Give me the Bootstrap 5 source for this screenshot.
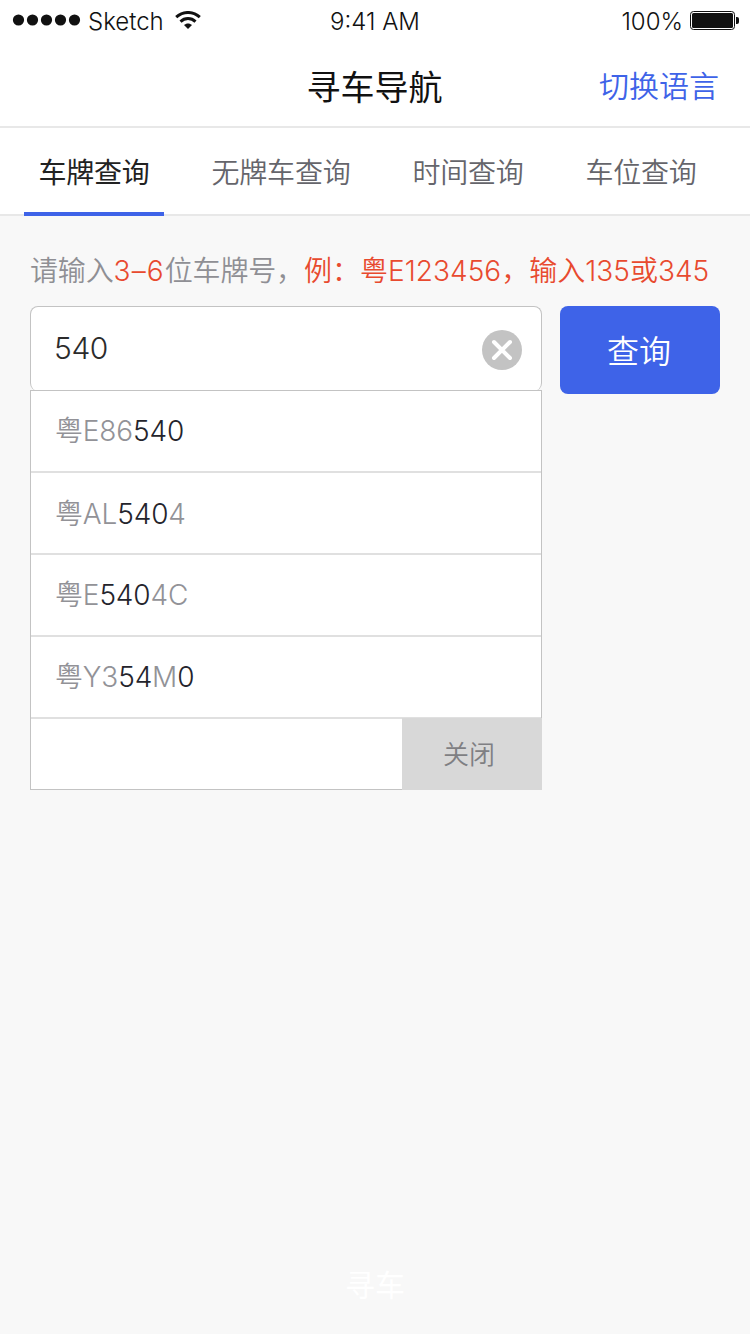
<!DOCTYPE html>
<html lang="zh-CN">
<head>
<meta charset="utf-8">
<meta name="viewport" content="width=device-width, initial-scale=1">
<title>寻车导航</title>
<link href="https://cdn.jsdelivr.net/npm/bootstrap@5.3.0/dist/css/bootstrap.min.css" rel="stylesheet">
<style>
  body { font-family: Inter, "Noto Sans CJK SC", sans-serif; background: #f8f8f8; color: #111; height: 1334px; overflow: hidden; line-height: 40px; }
  .status-bar { height: 40px; font-size: 24px; font-weight: 300; padding: 0 11px 0 12px; }
  .status-bar > * { flex: 1 1 0; }
  .status-bar span, .clock { padding-top: 3px; }
  .clock { padding-right: 1px; }
  .carrier { margin-left: 7px; }
  .wifi { margin-left: 11px; }
  .battery { margin-left: 7px; }
  .title-bar { height: 88px; border-bottom: 2px solid #e8e8e8; padding: 0 31px; }
  .title-bar > * { flex: 1 1 0; }
  .title-bar h1 { font-size: 34px; line-height: 78px; padding: 10px 1px 0 0; margin: 0; font-weight: 400; }
  .lang { color: #3e63e8; font-size: 30px; font-weight: 350; padding-top: 6px; }
  .tabs-row { height: 88px; border-bottom: 2px solid #e8e8e8; padding-left: 24px; }
  .tabs-row .nav-link { height: 88px; padding: 0; line-height: 91px; font-size: 28px; font-weight: 350; color: #65656b; text-align: center; width: 140px; white-space: nowrap; letter-spacing: -.2px; }
  .tabs-row .nav-link.active { color: #222; font-weight: 400; border-bottom: 4px solid #3e63e8; }
  .tabs-row .wide-gap { margin-left: 47px; }
  .tabs-row .slim-gap { margin-left: 33px; }
  .hint { font-size: 28px; font-weight: 350; color: #8f8f94; padding: 1px 30px 0; margin-top: 34px; height: 56px; white-space: nowrap; letter-spacing: -.15px; }
  .hint b { color: #e84a2f; font-weight: 350; letter-spacing: .03px; }
  .hint .digits { letter-spacing: 1.1px; }
  .search-area { padding: 0 30px; gap: 18px; }
  .combo { width: 512px; }
  .field { height: 85px; border: 1px solid #c3c3c3; border-bottom-width: 0; border-radius: 8px; padding: 2px 19px 0 24px; font-size: 30px; font-weight: 300; color: #2b2b2b; }
  .field span { letter-spacing: -.4px; padding-bottom: 4px; margin-left: -1px; }
  .go { width: 160px; height: 88px; border-radius: 8px; background: #3e63e8; color: #fff; font-size: 32px; font-weight: 350; padding: 3px 2px 0 0; }
  .results { border: 1px solid #c3c3c3; margin-top: -1px; height: 400px; }
  .results .list-group-item { height: 82px; border: 0; border-bottom: 2px solid #e0e0e0 !important; border-radius: 0; padding: 20px 24px; font-size: 28px; font-weight: 350; color: #929297; white-space: nowrap; letter-spacing: -.15px; }
  .results .list-group-item:nth-child(2) { padding-top: 21px; }
  .results b { font-weight: 350; color: #24242c; }
  .close-btn { width: 140px; height: 72px; margin: -1px -1px 0 auto; border-radius: 0; background: #d8d8d8; color: #7f7f83; font-size: 26px; font-weight: 350; padding: 0 6px 0 0; position: relative; }
  .find { color: #fff; font-size: 30px; font-weight: 400; padding-bottom: 29px; }
</style>
</head>
<body class="d-flex flex-column">
<header class="bg-white">
  <div class="status-bar d-flex align-items-center">
    <div class="d-flex align-items-center">
      <svg width="69" height="12" viewBox="0 0 69 12" fill="#111"><circle cx="6.5" cy="6" r="5.6"/><circle cx="20.5" cy="6" r="5.6"/><circle cx="34.5" cy="6" r="5.6"/><circle cx="48.5" cy="6" r="5.6"/><circle cx="62.5" cy="6" r="5.6"/></svg>
      <span class="carrier">Sketch</span>
      <svg class="wifi" width="26" height="18" viewBox="0 0 26 18" fill="none" stroke="#111" stroke-width="3"><path d="M1.2 6.2C8-.1 18-.1 24.8 6.2"/><path d="M5.5 10.6C9.8 6.6 16.2 6.6 20.5 10.6"/><path d="M13 17.9 9 14.1C11.2 12 14.8 12 17 14.1Z" fill="#111" stroke="none"/></svg>
    </div>
    <div class="clock text-center">9:41 AM</div>
    <div class="d-flex align-items-center justify-content-end">
      <span>100%</span>
      <svg class="battery" width="49" height="19" viewBox="0 0 49 19"><rect x=".5" y=".5" width="44" height="18" rx="3" fill="none" stroke="#111"/><rect x="2" y="2" width="41" height="15" rx="1.5" fill="#111"/><path d="M46 6h1a2 2 0 0 1 2 2v3a2 2 0 0 1-2 2h-1Z" fill="#111"/></svg>
    </div>
  </div>
  <div class="title-bar d-flex align-items-center">
    <span></span>
    <h1 class="text-center">寻车导航</h1>
    <a class="lang text-end text-decoration-none" href="#">切换语言</a>
  </div>
  <nav class="nav tabs-row flex-nowrap">
    <a class="nav-link active" href="#">车牌查询</a>
    <a class="nav-link wide-gap" href="#">无牌车查询</a>
    <a class="nav-link wide-gap" href="#">时间查询</a>
    <a class="nav-link slim-gap" href="#">车位查询</a>
  </nav>
</header>
<main class="flex-grow-1">
  <div class="hint">请输入<b class="digits">3–6</b>位车牌号，<b>例：粤E123456，输入135或345</b></div>
  <div class="search-area d-flex align-items-start">
    <div class="combo">
      <div class="field bg-white d-flex align-items-center justify-content-between">
        <span>540</span>
        <svg width="40" height="40" viewBox="0 0 40 40"><circle cx="20" cy="20" r="20" fill="#c3c3c3"/><path d="M12 12 28 28M28 12 12 28" stroke="#fff" stroke-width="4" stroke-linecap="round"/></svg>
      </div>
      <div class="results bg-white">
        <div class="list-group list-group-flush">
          <div class="list-group-item">粤E86<b>540</b></div>
          <div class="list-group-item">粤AL<b>540</b>4</div>
          <div class="list-group-item">粤E<b>540</b>4C</div>
          <div class="list-group-item">粤Y3<b>54</b>M<b>0</b></div>
        </div>
        <button class="btn close-btn d-block">关闭</button>
      </div>
    </div>
    <button class="btn go">查询</button>
  </div>
</main>
<footer class="find text-center">寻车</footer>
<script src="https://cdn.jsdelivr.net/npm/bootstrap@5.3.0/dist/js/bootstrap.bundle.min.js"></script>
</body>
</html>
